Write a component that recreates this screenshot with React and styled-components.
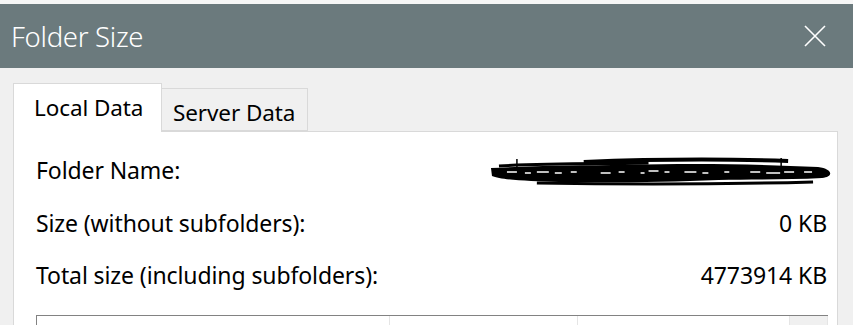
import React from "react";
import styled, { createGlobalStyle } from "styled-components";

const GlobalStyle = createGlobalStyle`
  html, body {
    margin: 0;
    padding: 0;
    background: #f0f0f0;
    overflow: hidden;
  }
  body {
    font-family: "Noto Sans", "Open Sans", sans-serif;
    color: #000;
  }
`;

const Window = styled.div`
  width: 853px;
  height: 325px;
  display: flex;
  flex-direction: column;
  overflow: hidden;
`;

const BehindStrip = styled.div`
  height: 4px;
  background: #f6f6f6;
  flex-shrink: 0;
`;

const TitleBar = styled.div`
  height: 64px;
  background: #6b7a7d;
  display: flex;
  align-items: center;
  justify-content: space-between;
  padding: 0 26px 0 11px;
  flex-shrink: 0;
`;

const Title = styled.div`
  color: #fff;
  font-size: 27.5px;
  font-weight: 300;
  letter-spacing: -0.3px;
`;

const CloseButton = styled.div`
  width: 24px;
  height: 24px;
  display: flex;
  align-items: center;
  justify-content: center;
`;

const Body = styled.div`
  flex: 1;
  background: #f0f0f0;
  padding: 15px 15px 0 13px;
  display: flex;
  flex-direction: column;
`;

const TabRow = styled.div`
  display: flex;
  align-items: flex-end;
  height: 48px;
  position: relative;
  z-index: 1;
`;

const Tab = styled.div`
  box-sizing: border-box;
  height: ${(p) => (p.$active ? "49px" : "43px")};
  width: ${(p) => (p.$active ? "149px" : "146px")};
  margin-bottom: ${(p) => (p.$active ? "-1px" : "0")};
  padding-left: ${(p) => (p.$active ? "20px" : "11px")};
  padding-top: ${(p) => (p.$active ? "0" : "5px")};
  padding-bottom: ${(p) => (p.$active ? "1px" : "0")};
  background: ${(p) => (p.$active ? "#fff" : "#f0f0f0")};
  border: 1px solid #d9d9d9;
  border-bottom: ${(p) => (p.$active ? "none" : "1px solid #d9d9d9")};
  border-left: ${(p) => (p.$active ? "1px solid #d9d9d9" : "none")};
  font-size: 22.5px;
  letter-spacing: -0.1px;
  display: flex;
  align-items: center;
  white-space: nowrap;
`;

const Panel = styled.div`
  flex: 1;
  width: 825px;
  box-sizing: border-box;
  background: #fff;
  border: 1px solid #d9d9d9;
  border-bottom: none;
  padding: 12px 10px 0 22px;
  display: flex;
  flex-direction: column;
`;

const InfoRow = styled.div`
  display: flex;
  justify-content: space-between;
  align-items: center;
  height: 52.5px;
  font-size: 23px;
  letter-spacing: -0.1px;
`;

const Label = styled.span`
  white-space: nowrap;
`;

const Value = styled.span`
  white-space: nowrap;
`;

const Redaction = styled.span`
  display: flex;
  margin-right: -6px;
  margin-top: 2px;
`;

const ListBox = styled.div`
  margin-top: 13px;
  height: 20px;
  width: 792px;
  box-sizing: border-box;
  border-top: 1px solid #828282;
  border-left: 1px solid #828282;
  display: grid;
  grid-template-columns: 353px 188px 212px 1fr;
`;

const ListColumn = styled.div`
  border-right: 1px solid #e5e5e5;
  background: ${(p) => (p.$scroll ? "#f0f0f0" : "#fff")};
`;

function Scribble() {
  return (
    <svg width="344" height="30" viewBox="0 0 345 30">
      <path
        d="M2 12 C40 10 90 9 140 9 C200 7 270 8 330 11 C345 13 346 21 334 22 C300 24 260 23 230 24 C180 26 120 27 70 26 C40 25 12 24 3 20 Z"
        fill="#000"
      />
      <path d="M95 6 C170 3 240 3 300 5" stroke="#000" strokeWidth="4" fill="none" />
      <path d="M48 27 C150 29 250 28 325 26" stroke="#000" strokeWidth="3" fill="none" />
      <path d="M10 10 C60 7 120 8 160 7" stroke="#000" strokeWidth="3" fill="none" />
      <path
        d="M18 16 h10 M36 17 h6 M48 16 h12 M66 17 h7 M82 16 h6 M112 17 h10 M130 16 h6 M152 17 h4 M160 15 h10 M176 16 h5 M196 16 h12 M214 17 h6 M236 16 h5 M262 16 h10 M278 17 h14 M296 16 h10 M316 16 h8"
        stroke="#fff"
        strokeWidth="1.3"
        fill="none"
      />
      <path d="M28 3 v10 M293 2 v8" stroke="#000" strokeWidth="1.5" />
    </svg>
  );
}

export default function App() {
  return (
    <>
      <GlobalStyle />
      <Window>
        <BehindStrip />
        <TitleBar>
          <Title>Folder Size</Title>
          <CloseButton>
            <svg width="22" height="22" viewBox="0 0 22 22">
              <path d="M1 1 L21 21 M21 1 L1 21" stroke="#fff" strokeWidth="1.6" />
            </svg>
          </CloseButton>
        </TitleBar>
        <Body>
          <TabRow>
            <Tab $active>Local Data</Tab>
            <Tab>Server Data</Tab>
          </TabRow>
          <Panel>
            <InfoRow>
              <Label>Folder Name:</Label>
              <Redaction>
                <Scribble />
              </Redaction>
            </InfoRow>
            <InfoRow>
              <Label>Size (without subfolders):</Label>
              <Value>0 KB</Value>
            </InfoRow>
            <InfoRow>
              <Label>Total size (including subfolders):</Label>
              <Value>4773914 KB</Value>
            </InfoRow>
            <ListBox>
              <ListColumn />
              <ListColumn />
              <ListColumn />
              <ListColumn $scroll />
            </ListBox>
          </Panel>
        </Body>
      </Window>
    </>
  );
}
